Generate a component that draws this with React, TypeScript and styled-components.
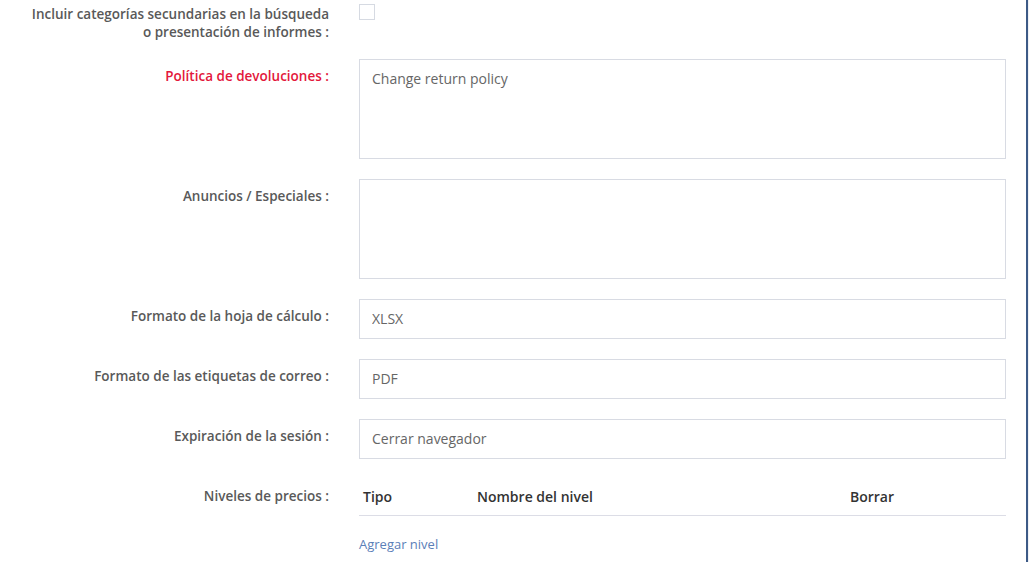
import React, { useState } from 'react';
import styled, { createGlobalStyle } from 'styled-components';

const GlobalStyle = createGlobalStyle`
  html, body {
    margin: 0;
    padding: 0;
    background: #fff;
  }
  body {
    font-family: 'Open Sans', 'Liberation Sans', sans-serif;
    overflow: hidden;
  }
`;

const Page = styled.div`
  display: flex;
  width: 1029px;
  height: 562px;
  overflow: hidden;
`;

const Content = styled.div`
  flex: 1;
  border-right: 2px solid #3d5a86;
  padding-top: 3px;
`;

const Edge = styled.div`
  width: 1px;
  background: #eef1f6;
`;

const Row = styled.div<{ $tight?: boolean }>`
  display: grid;
  grid-template-columns: 329px 647px;
  column-gap: 30px;
  margin-bottom: ${(p) => (p.$tight ? '18px' : '20px')};
`;

const Label = styled.label<{ $required?: boolean; $flush?: boolean }>`
  box-sizing: border-box;
  padding: ${(p) => (p.$flush ? '2px' : '8px')} 0 0 27px;
  text-align: right;
  font-size: 13.5px;
  font-weight: 600;
  line-height: 18px;
  color: ${(p) => (p.$required ? '#e3173b' : '#595959')};
`;

const Checkbox = styled.input.attrs({ type: 'checkbox' })`
  appearance: none;
  margin: 1px 0 0;
  width: 16px;
  height: 16px;
  border: 1px solid #d6dae2;
  background: #fff;
  box-sizing: border-box;
`;

const TextArea = styled.textarea`
  box-sizing: border-box;
  width: 100%;
  height: 100px;
  margin: 0;
  padding: 9px 12px;
  border: 1px solid #d8dbe3;
  border-radius: 0;
  resize: none;
  font-family: 'Open Sans', 'Liberation Sans', sans-serif;
  font-size: 14px;
  line-height: 20px;
  color: #666;
  display: block;
`;

const TextInput = styled.input`
  box-sizing: border-box;
  width: 100%;
  height: 40px;
  margin: 0;
  padding: 0 12px 2px;
  border: 1px solid #d8dbe3;
  border-radius: 0;
  font-family: 'Open Sans', 'Liberation Sans', sans-serif;
  font-size: 14px;
  color: #666;
  display: block;
`;

const Table = styled.table`
  width: 100%;
  border-collapse: collapse;
  table-layout: fixed;
`;

const HeadCell = styled.th<{ $w?: number }>`
  box-sizing: border-box;
  padding: 8px 4px 8px;
  text-align: left;
  font-size: 14px;
  font-weight: 600;
  line-height: 20px;
  color: #333;
  border-bottom: 1px solid #dcdde6;
  width: ${(p) => (p.$w ? `${p.$w}px` : 'auto')};
`;

const AddLink = styled.a`
  display: inline-block;
  margin-top: 19px;
  font-size: 13px;
  line-height: 18px;
  color: #5b80b8;
  text-decoration: none;
  cursor: pointer;
`;

export default function App() {
  const [policy, setPolicy] = useState('Change return policy');
  const [ads, setAds] = useState('');
  const [sheet, setSheet] = useState('XLSX');
  const [labels, setLabels] = useState('PDF');
  const [session, setSession] = useState('Cerrar navegador');

  return (
    <>
      <GlobalStyle />
      <Page>
        <Content>
          <Row $tight>
            <Label $flush>
              Incluir categorías secundarias en la búsqueda o presentación de informes :
            </Label>
            <div>
              <Checkbox />
            </div>
          </Row>
          <Row>
            <Label $required>Política de devoluciones :</Label>
            <TextArea value={policy} onChange={(e) => setPolicy(e.target.value)} />
          </Row>
          <Row>
            <Label>Anuncios / Especiales :</Label>
            <TextArea value={ads} onChange={(e) => setAds(e.target.value)} />
          </Row>
          <Row>
            <Label>Formato de la hoja de cálculo :</Label>
            <TextInput value={sheet} onChange={(e) => setSheet(e.target.value)} />
          </Row>
          <Row>
            <Label>Formato de las etiquetas de correo :</Label>
            <TextInput value={labels} onChange={(e) => setLabels(e.target.value)} />
          </Row>
          <Row>
            <Label>Expiración de la sesión :</Label>
            <TextInput value={session} onChange={(e) => setSession(e.target.value)} />
          </Row>
          <Row>
            <Label>Niveles de precios :</Label>
            <div>
              <Table>
                <thead>
                  <tr>
                    <HeadCell $w={114}>Tipo</HeadCell>
                    <HeadCell $w={373}>Nombre del nivel</HeadCell>
                    <HeadCell>Borrar</HeadCell>
                  </tr>
                </thead>
              </Table>
              <AddLink>Agregar nivel</AddLink>
            </div>
          </Row>
        </Content>
        <Edge />
      </Page>
    </>
  );
}
